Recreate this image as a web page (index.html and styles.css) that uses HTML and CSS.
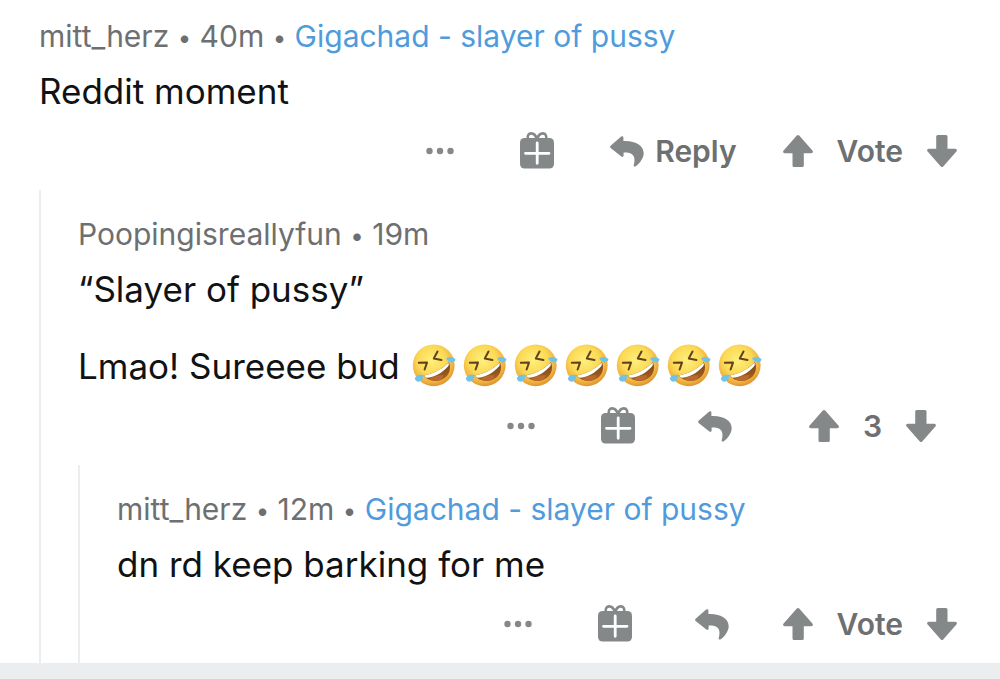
FILE: index.html
```html
<!DOCTYPE html>
<html lang="en">
<head>
    <meta charset="UTF-8">
    <meta name="viewport" content="width=device-width, initial-scale=1.0">
    <title>Comments</title>
    <link rel="stylesheet" href="styles.css">
</head>
<body>
    <!-- shared icons -->
    <svg class="sprite" aria-hidden="true">
        <defs>
            <radialGradient id="face" cx="45%" cy="38%" r="62%">
                <stop offset="0" stop-color="#fdf07c"/>
                <stop offset="0.55" stop-color="#fbd955"/>
                <stop offset="0.85" stop-color="#f0b03e"/>
                <stop offset="1" stop-color="#dc9432"/>
            </radialGradient>
            <linearGradient id="mouth" x1="0" y1="0" x2="0.4" y2="1">
                <stop offset="0" stop-color="#5c3312"/>
                <stop offset="1" stop-color="#a5601f"/>
            </linearGradient>
        </defs>
        <symbol id="dots" viewBox="0 0 28 8">
            <circle cx="3.5" cy="4" r="3.2"/><circle cx="14" cy="4" r="3.2"/><circle cx="24.5" cy="4" r="3.2"/>
        </symbol>
        <symbol id="gift" viewBox="0 0 34 38">
            <rect y="6" width="34" height="30.5" rx="4.5"/>
            <path d="M17 7C15.5 3 13.5 1.4 11.3 1.4C8.5 1.4 6.8 4 8.2 7M17 7C18.5 3 20.5 1.4 22.7 1.4C25.5 1.4 27.2 4 25.8 7" fill="none" stroke="currentColor" stroke-width="2.6"/>
            <path d="M5.5 21.3H29M17.2 11V31.3" stroke="#fff" stroke-width="2.8" stroke-linecap="round"/>
        </symbol>
        <symbol id="reply" viewBox="0 0 34 31">
            <path d="M.6 9.8 11.2.6Q13.2-.6 13.4 1.6V5C26 4.5 33.7 9.5 33.7 17.5C33.7 22 29 28.5 25.4 30.5Q23.6 31 23.7 29.2C26 20.5 23.5 16 13.6 16.4V19.8Q13.2 21.6 11.4 20.6L.6 11.9Q-.4 10.8.6 9.8Z"/>
        </symbol>
        <symbol id="arrow" viewBox="0 0 30 32">
            <path d="M13.8.6Q15-.4 16.2.6L29.6 15.8Q30.6 18 28.3 18.2H20.8V30.5Q20.8 32 19.3 32H11Q9.5 32 9.5 30.5V18.2H1.7Q-.6 18 .4 15.8Z"/>
        </symbol>
        <symbol id="rofl" viewBox="0 0 44 44">
            <circle cx="21.7" cy="21.3" r="20.9" fill="url(#face)"/>
            <path d="M11.5 31.5C21 30 30 25.5 36.8 18C40 25 36.5 33 30 35.5C23.5 38.5 15.5 36.8 11.5 31.5Z" fill="url(#mouth)"/>
            <path d="M17 35.3C20 32.5 26 30.8 31.5 31.3C30.8 34 29.5 35.5 28 36.3C24.5 37.3 20.5 37 17 35.3Z" fill="#b96a2c"/>
            <path d="M12 31.5C21 30 30 25.5 36.5 18.5C37 20 36.9 21.2 36.2 22.2C29.5 29.5 22.5 33 14.5 33.8C13.3 33.3 12.5 32.5 12 31.5Z" fill="#fff"/>
            <path d="M6.8 18.8 15 18.6 12.6 25.5M25.5 7.5 21.8 14.5 29.5 16" fill="none" stroke="#65401a" stroke-width="2" stroke-linecap="round" stroke-linejoin="round"/>
            <path d="M34 14.5C36 12.3 41 12.3 43.5 15C43 19.5 38 20 34 14.5ZM11.5 31C7.5 30 3.5 31.5 2.8 34.5C3.5 39 11 39.5 11.5 31Z" fill="#6fc3e8"/>
        </symbol>
    </svg>

    <main class="thread">
        <article class="comment">
            <header class="meta">
                <span>mitt_herz</span> <span class="dot">•</span> <span>40m</span> <span class="dot">•</span> <span class="flair">Gigachad - slayer of pussy</span>
            </header>
            <div class="text">
                <p>Reddit moment</p>
            </div>
            <div class="actions">
                <button class="more" aria-label="More"><svg><use href="#dots"/></svg></button>
                <button class="award" aria-label="Give award"><svg><use href="#gift"/></svg></button>
                <button class="reply labeled"><svg><use href="#reply"/></svg>Reply</button>
                <div class="votes">
                    <button aria-label="Upvote"><svg><use href="#arrow"/></svg></button>
                    <span>Vote</span>
                    <button class="down" aria-label="Downvote"><svg><use href="#arrow"/></svg></button>
                </div>
            </div>
        </article>

        <section class="replies">
            <article class="comment">
                <header class="meta">
                    <span>Poopingisreallyfun</span> <span class="dot">•</span> <span>19m</span>
                </header>
                <div class="text">
                    <p>“Slayer of pussy”</p>
                    <p>Lmao! Sureeee bud
                        <span class="emojis" role="img" aria-label="rolling on the floor laughing">
                            <svg><use href="#rofl"/></svg>
                            <svg><use href="#rofl"/></svg>
                            <svg><use href="#rofl"/></svg>
                            <svg><use href="#rofl"/></svg>
                            <svg><use href="#rofl"/></svg>
                            <svg><use href="#rofl"/></svg>
                            <svg><use href="#rofl"/></svg>
                        </span>
                    </p>
                </div>
                <div class="actions">
                    <button class="more" aria-label="More"><svg><use href="#dots"/></svg></button>
                    <button class="award" aria-label="Give award"><svg><use href="#gift"/></svg></button>
                    <button class="reply" aria-label="Reply"><svg><use href="#reply"/></svg></button>
                    <div class="votes scored">
                        <button aria-label="Upvote"><svg><use href="#arrow"/></svg></button>
                        <span>3</span>
                        <button class="down" aria-label="Downvote"><svg><use href="#arrow"/></svg></button>
                    </div>
                </div>
            </article>

            <section class="replies">
                <article class="comment">
                    <header class="meta">
                        <span>mitt_herz</span> <span class="dot">•</span> <span>12m</span> <span class="dot">•</span> <span class="flair">Gigachad - slayer of pussy</span>
                    </header>
                    <div class="text">
                        <p>dn rd keep barking for me</p>
                    </div>
                    <div class="actions">
                        <button class="more" aria-label="More"><svg><use href="#dots"/></svg></button>
                        <button class="award" aria-label="Give award"><svg><use href="#gift"/></svg></button>
                        <button class="reply" aria-label="Reply"><svg><use href="#reply"/></svg></button>
                        <div class="votes">
                            <button aria-label="Upvote"><svg><use href="#arrow"/></svg></button>
                            <span>Vote</span>
                            <button class="down" aria-label="Downvote"><svg><use href="#arrow"/></svg></button>
                        </div>
                    </div>
                </article>
            </section>
        </section>
    </main>
</body>
</html>
```
FILE: styles.css
```css
body {
    margin: 0;
    background-color: #ecedef;
    color: #111213;
    font-family: Inter, "Liberation Sans", sans-serif;
}

.sprite {
    position: absolute;
    width: 0;
    height: 0;
}

.thread {
    background-color: #fff;
    padding-left: 39px;
}

.comment {
    padding: 24px 43px 19px 0;
}

.thread > .comment {
    padding-top: 16px;
}

.replies {
    border-left: 2px solid #ecedef;
    padding-left: 37px;
}

.meta {
    font-size: 30px;
    line-height: 40px;
    color: #6d6f71;
}

.dot {
    font-size: 24px;
    line-height: 1;
    vertical-align: 1px;
}

.flair {
    color: #4f9bdc;
}

.text {
    margin: 13px 0 18px;
    font-size: 35px;
    line-height: 44px;
}

.text p {
    margin: 0;
}

.text p + p {
    margin-top: 33px;
}

.emojis {
    display: inline-flex;
    gap: 7px;
    margin-left: 2px;
    vertical-align: top;
}

.emojis svg {
    width: 44px;
    height: 44px;
}

.actions {
    display: flex;
    justify-content: flex-end;
    align-items: center;
    height: 40px;
    font-size: 30px;
    font-weight: 600;
    color: #6d6f71;
}

button {
    display: flex;
    align-items: center;
    padding: 0;
    border: 0;
    background: none;
    color: inherit;
    font: inherit;
    cursor: pointer;
}

button svg {
    display: block;
    fill: currentColor;
    color: #858889;
}

.more {
    margin-right: 66px;
}

.more svg {
    width: 28px;
    height: 8px;
}

.award svg {
    width: 34px;
    height: 38px;
}

.reply {
    margin: 0 54px 0 63px;
}

.reply.labeled {
    gap: 11px;
    margin: 0 46px 0 56px;
}

.reply svg {
    width: 34px;
    height: 31px;
}

.votes {
    display: flex;
    align-items: center;
    gap: 24px;
}

.votes.scored {
    padding: 0 21px 0 23px;
}

.votes svg {
    width: 30px;
    height: 32px;
}

.down svg {
    transform: rotate(180deg);
}
```
